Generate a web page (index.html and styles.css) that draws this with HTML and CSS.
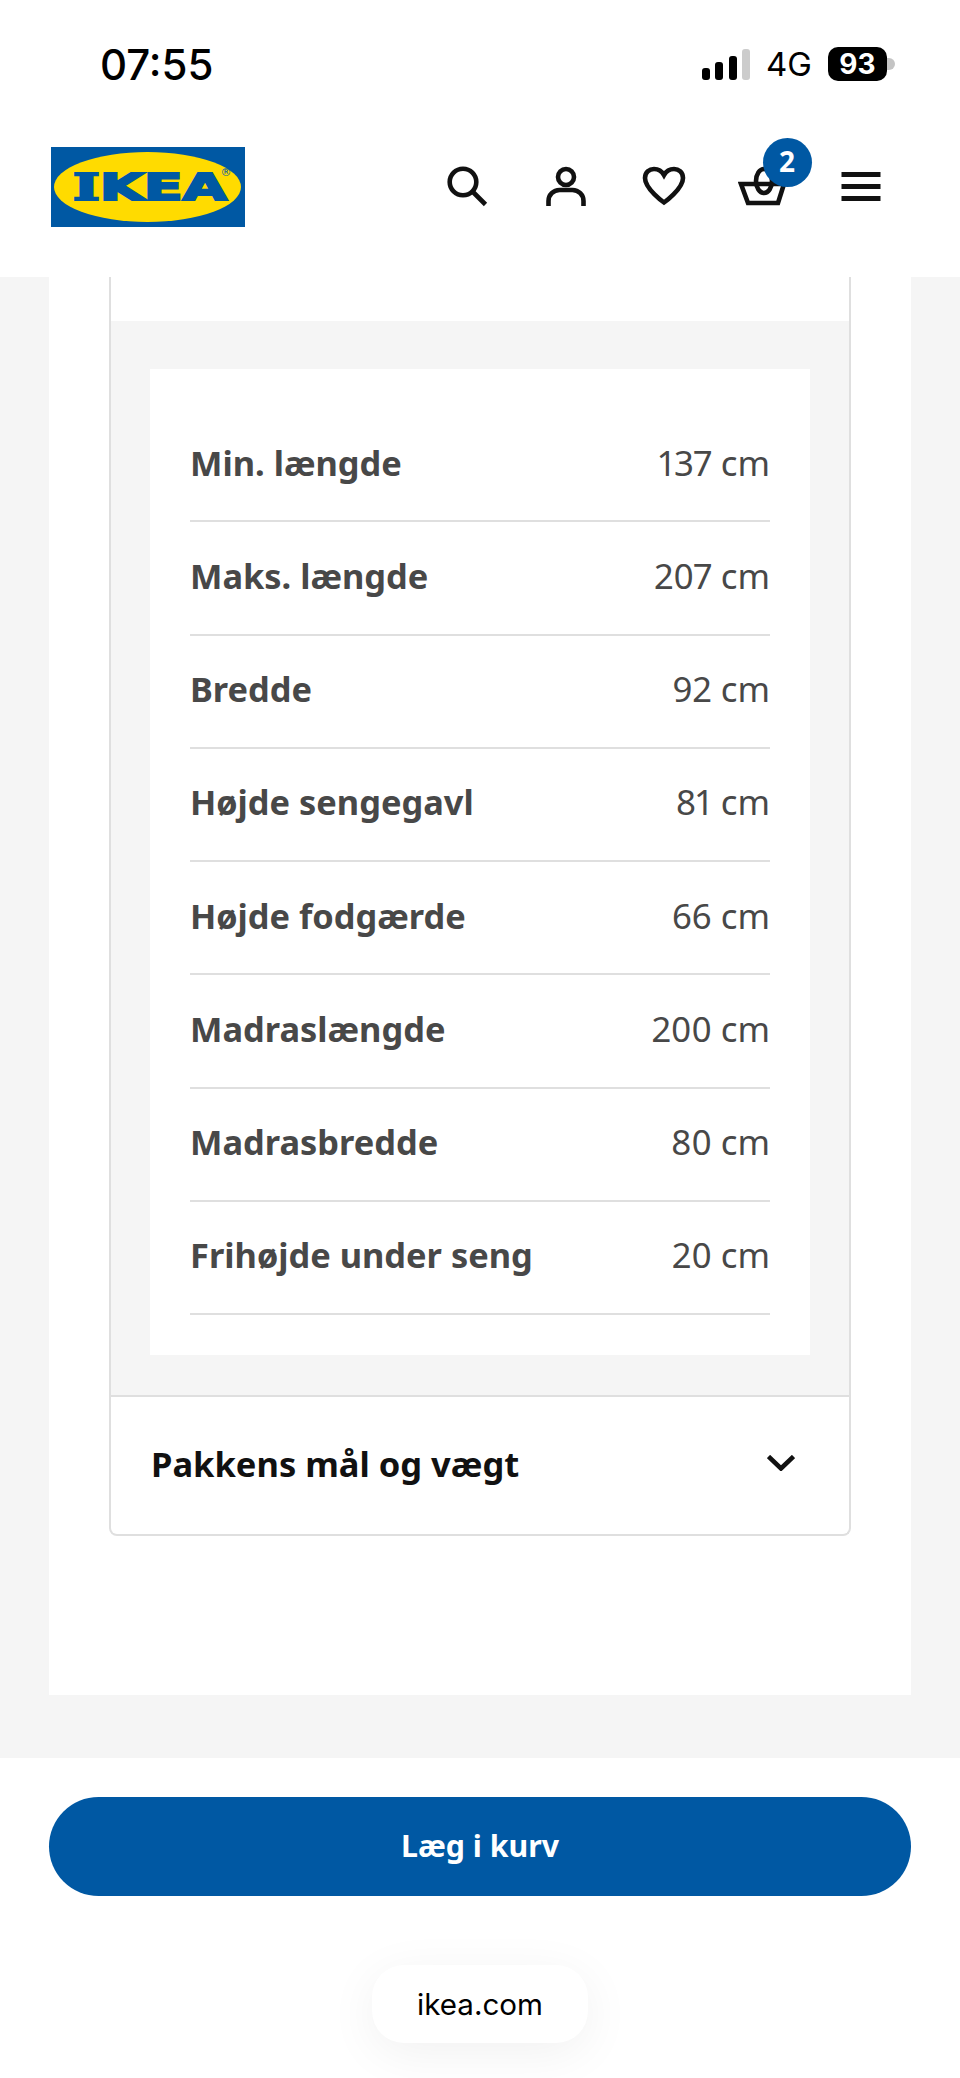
FILE: index.html
```html
<!DOCTYPE html>
<html lang="da">
<head>
    <meta charset="UTF-8">
    <meta name="viewport" content="width=device-width, initial-scale=1.0">
    <title>IKEA</title>
    <link rel="stylesheet" href="styles.css">
</head>
<body>
    <header class="header">
        <div class="status-bar">
            <span class="time">07:55</span>
            <div class="status-right">
                <svg class="signal" width="48" height="31" viewBox="0 0 48 31">
                    <rect x="0" y="19" width="8" height="12" rx="3" fill="#000"/>
                    <rect x="13" y="13" width="8" height="18" rx="3" fill="#000"/>
                    <rect x="27" y="7" width="8" height="24" rx="3" fill="#000"/>
                    <rect x="40" y="0" width="8" height="31" rx="3" fill="#ccc"/>
                </svg>
                <span class="network">4G</span>
                <div class="battery"><span class="battery-level">93</span><span class="battery-tip"></span></div>
            </div>
        </div>
        <div class="nav">
            <svg class="logo" width="194" height="80" viewBox="0 0 194 80">
                <rect width="194" height="80" fill="#0058a3"/>
                <ellipse cx="96.5" cy="40" rx="93.5" ry="35" fill="#ffdb00"/>
                <text class="logo-text" x="22" y="53" textLength="154" lengthAdjust="spacingAndGlyphs"><tspan class="logo-i">I</tspan>KEA</text>
                <text class="logo-mark" x="175" y="29" text-anchor="middle">®</text>
            </svg>
            <div class="nav-icons">
                <svg class="icon" viewBox="0 0 50 50">
                    <circle cx="21" cy="20" r="13.3"/>
                    <path d="M31 30L43.5 42.5"/>
                </svg>
                <svg class="icon" viewBox="0 0 50 50">
                    <circle cx="25" cy="15" r="8"/>
                    <path d="M7.5 44v-5a11 11 0 0 1 11-11h13a11 11 0 0 1 11 11v5"/>
                </svg>
                <svg class="icon" viewBox="0 0 50 50">
                    <path d="M25 40.5C25 40.5 6 27 6 16C6 10 10.5 7 15 7C19.5 7 23 9.5 25 13C27 9.5 30.5 7 35 7C39.5 7 44 10 44 16C44 27 25 40.5 25 40.5Z"/>
                </svg>
                <div class="basket">
                    <svg class="icon" viewBox="0 0 50 50">
                        <ellipse cx="26" cy="19" rx="8" ry="12"/>
                        <path d="M3 22H46L40 41H10Z"/>
                    </svg>
                    <span class="badge">2</span>
                </div>
                <svg class="icon" viewBox="0 0 50 50">
                    <path class="bar" d="M5.5 12.5H44.5M5.5 24.5H44.5M5.5 36.5H44.5"/>
                </svg>
            </div>
        </div>
    </header>

    <main class="panel">
        <div class="card">
            <div class="card-top"></div>
            <div class="measures">
                <div class="measures-box">
                    <div class="row"><span class="label">Min. længde</span><span class="value">137 cm</span></div>
                    <div class="row"><span class="label">Maks. længde</span><span class="value">207 cm</span></div>
                    <div class="row"><span class="label">Bredde</span><span class="value">92 cm</span></div>
                    <div class="row"><span class="label">Højde sengegavl</span><span class="value">81 cm</span></div>
                    <div class="row"><span class="label">Højde fodgærde</span><span class="value">66 cm</span></div>
                    <div class="row"><span class="label">Madraslængde</span><span class="value">200 cm</span></div>
                    <div class="row"><span class="label">Madrasbredde</span><span class="value">80 cm</span></div>
                    <div class="row"><span class="label">Frihøjde under seng</span><span class="value">20 cm</span></div>
                </div>
            </div>
            <div class="accordion">
                <span class="accordion-title">Pakkens mål og vægt</span>
                <svg class="chevron" width="28" height="16" viewBox="0 0 28 16">
                    <path d="M1.5 1.5L14 13.5L26.5 1.5"/>
                </svg>
            </div>
        </div>
    </main>

    <footer class="footer">
        <button class="buy-button">Læg i kurv</button>
        <div class="url-pill">ikea.com</div>
    </footer>
</body>
</html>
```

FILE: styles.css
```css
body {
    margin: 0;
    background: #f5f5f5;
    font-family: "Noto Sans", Arial, sans-serif;
}

.header {
    height: 277px;
    background: white;
}
.status-bar {
    height: 128px;
    padding: 0 65px 0 100px;
    display: flex;
    justify-content: space-between;
    align-items: center;
    font-family: Inter, sans-serif;
    color: black;
}
.time {
    font-size: 42px;
    font-weight: 500;
}
.status-right {
    display: flex;
    align-items: center;
}
.signal {
    margin-right: 16px;
}
.network {
    font-size: 33px;
    font-weight: 400;
    margin-right: 16px;
}
.battery {
    display: flex;
    align-items: center;
}
.battery-level {
    width: 59px;
    height: 34px;
    line-height: 34px;
    background: black;
    border-radius: 10px;
    color: white;
    font-size: 28px;
    font-weight: 700;
    text-align: center;
}
.battery-tip {
    width: 8px;
    height: 12px;
    background: #c4c4c4;
    border-radius: 0 6px 6px 0;
}

.nav {
    margin-top: 19px;
    padding: 0 74px 0 51px;
    display: flex;
    justify-content: space-between;
    align-items: center;
}
.logo {
    display: block;
}
.logo-text {
    font-family: "DejaVu Sans", sans-serif;
    font-weight: 700;
    font-size: 38px;
    fill: #0058a3;
    stroke: #0058a3;
    stroke-width: 2.2px;
}
.logo-i {
    font-family: "DejaVu Serif", serif;
}
.logo-mark {
    font-family: "DejaVu Sans", sans-serif;
    font-size: 11px;
    fill: #0058a3;
}
.nav-icons {
    display: flex;
    gap: 48.5px;
}
.icon {
    display: block;
    width: 50px;
    height: 50px;
    fill: none;
    stroke: #111;
    stroke-width: 4.6;
}
.icon .bar {
    stroke-width: 5;
}
.basket {
    position: relative;
}
.badge {
    position: absolute;
    left: 25px;
    top: -24px;
    width: 49px;
    height: 49px;
    line-height: 47px;
    border-radius: 50%;
    background: #0058a3;
    color: white;
    font-size: 28px;
    font-weight: 700;
    text-align: center;
}

.panel {
    height: 1418px;
    margin: 0 49px 63px;
    padding: 0 60px;
    background: white;
}
.card {
    border: 2px solid #dfdfdf;
    border-top: none;
    border-radius: 0 0 8px 8px;
}
.card-top {
    height: 44px;
}
.measures {
    padding: 48px 39px 40px;
    background: #f5f5f5;
    border-bottom: 2px solid #dfdfdf;
}
.measures-box {
    padding: 40px;
    background: white;
}
.row {
    height: 106.25px;
    padding-bottom: 5px;
    border-bottom: 2px solid #dfdfdf;
    display: flex;
    justify-content: space-between;
    align-items: center;
    color: #484848;
    font-size: 34.4px;
}
.value {
    font-size: 34.8px;
    font-variant-numeric: proportional-nums;
}
.label {
    font-weight: 700;
}
.accordion {
    height: 132px;
    padding: 0 54px 5px 40px;
    display: flex;
    justify-content: space-between;
    align-items: center;
}
.accordion-title {
    color: #111;
    font-size: 34.5px;
    font-weight: 700;
}
.chevron {
    fill: none;
    stroke: #111;
    stroke-width: 4.6;
}

.footer {
    height: 320px;
    padding: 39px 49px 0;
    box-sizing: border-box;
    background: white;
    display: flex;
    flex-direction: column;
    align-items: center;
}
.buy-button {
    width: 100%;
    height: 99px;
    padding-bottom: 3px;
    border: none;
    border-radius: 50px;
    background: #0058a3;
    color: white;
    font-family: "Noto Sans", Arial, sans-serif;
    font-size: 30.3px;
    font-weight: 700;
}
.url-pill {
    margin-top: 69px;
    width: 216px;
    height: 78px;
    line-height: 78px;
    border-radius: 32px;
    background: white;
    box-shadow: 0 10px 50px rgba(0, 0, 0, 0.06);
    font-family: Inter, sans-serif;
    font-size: 29.6px;
    color: black;
    text-align: center;
}
```
